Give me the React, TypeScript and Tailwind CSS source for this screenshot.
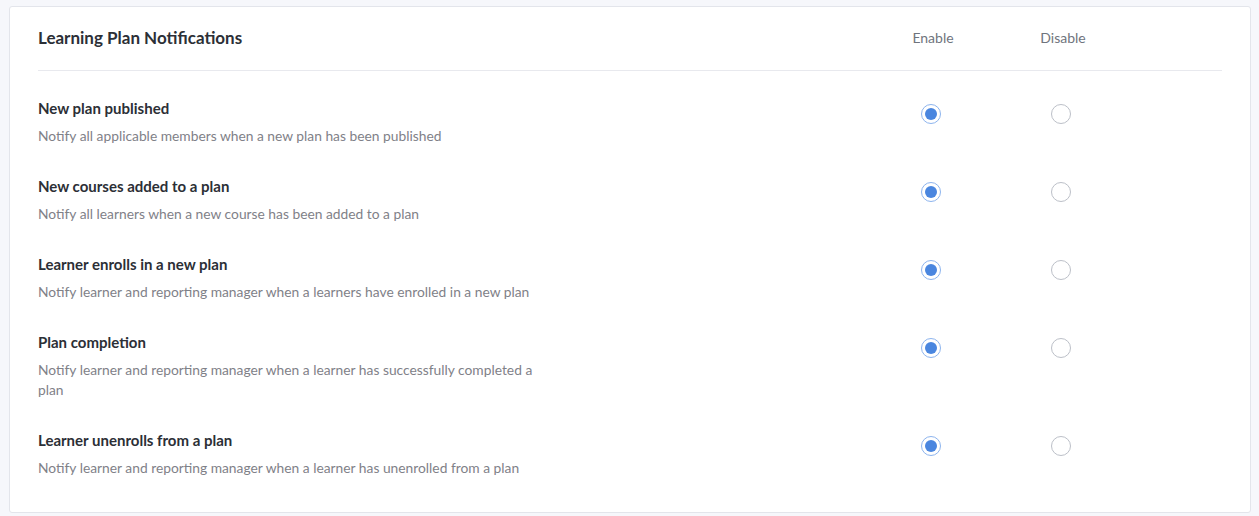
import { useState } from "react";

type Setting = {
	id: string;
	title: string;
	description: string;
};

const settings: Setting[] = [
	{
		id: "published",
		title: "New plan published",
		description: "Notify all applicable members when a new plan has been published",
	},
	{
		id: "courses",
		title: "New courses added to a plan",
		description: "Notify all learners when a new course has been added to a plan",
	},
	{
		id: "enrolls",
		title: "Learner enrolls in a new plan",
		description: "Notify learner and reporting manager when a learners have enrolled in a new plan",
	},
	{
		id: "completion",
		title: "Plan completion",
		description: "Notify learner and reporting manager when a learner has successfully completed a plan",
	},
	{
		id: "unenrolls",
		title: "Learner unenrolls from a plan",
		description: "Notify learner and reporting manager when a learner has unenrolled from a plan",
	},
];

function Radio({ checked, onClick }: { checked: boolean; onClick: () => void }) {
	return (
		<button
			type="button"
			onClick={onClick}
			className={`mr-[4px] flex h-[20px] w-[20px] items-center justify-center rounded-full border bg-white ${
				checked ? "border-[#8db4ee]" : "border-[#bcc0c8]"
			}`}
		>
			{checked && <span className="h-[12px] w-[12px] rounded-full bg-[#4a86df]" />}
		</button>
	);
}

export default function App() {
	const [values, setValues] = useState<Record<string, boolean>>(
		Object.fromEntries(settings.map((s) => [s.id, true]))
	);

	const setValue = (id: string, v: boolean) => setValues((prev) => ({ ...prev, [id]: v }));

	return (
		<div
			className="min-h-[516px] bg-[#f6f7fb] pt-[6px] pl-[9px] pr-[8px] pb-[4px]"
			style={{ fontFamily: "Lato, 'Open Sans', sans-serif" }}
		>
			<div className="rounded-[3px] border border-[#e3e5eb] bg-white px-[28px] pb-[4px]">
				<div className="grid h-[64px] grid-cols-[1fr_130px_130px_94px] items-center border-b border-[#e8e9ee]">
					<h2 className="-mt-[2px] text-[17px] font-bold text-[#2c2f36]">Learning Plan Notifications</h2>
					<span className="-mt-[2px] text-center text-[14px] text-[#6f747d]">Enable</span>
					<span className="-mt-[2px] text-center text-[14px] text-[#6f747d]">Disable</span>
					<span />
				</div>
				<div className="pt-[27px]">
					{settings.map((s) => (
						<div key={s.id} className="grid grid-cols-[1fr_130px_130px_94px] items-start pb-[30px]">
							<div>
								<p className="text-[15px] leading-[20px] font-bold text-[#2c2f36]">{s.title}</p>
								<p className="mt-[8px] max-w-[510px] text-[13.8px] leading-[20px] text-[#7f8188]">
									{s.description}
								</p>
							</div>
							<div className="mt-[6px] flex justify-center">
								<Radio checked={values[s.id]} onClick={() => setValue(s.id, true)} />
							</div>
							<div className="mt-[6px] flex justify-center">
								<Radio checked={!values[s.id]} onClick={() => setValue(s.id, false)} />
							</div>
							<span />
						</div>
					))}
				</div>
			</div>
		</div>
	);
}
